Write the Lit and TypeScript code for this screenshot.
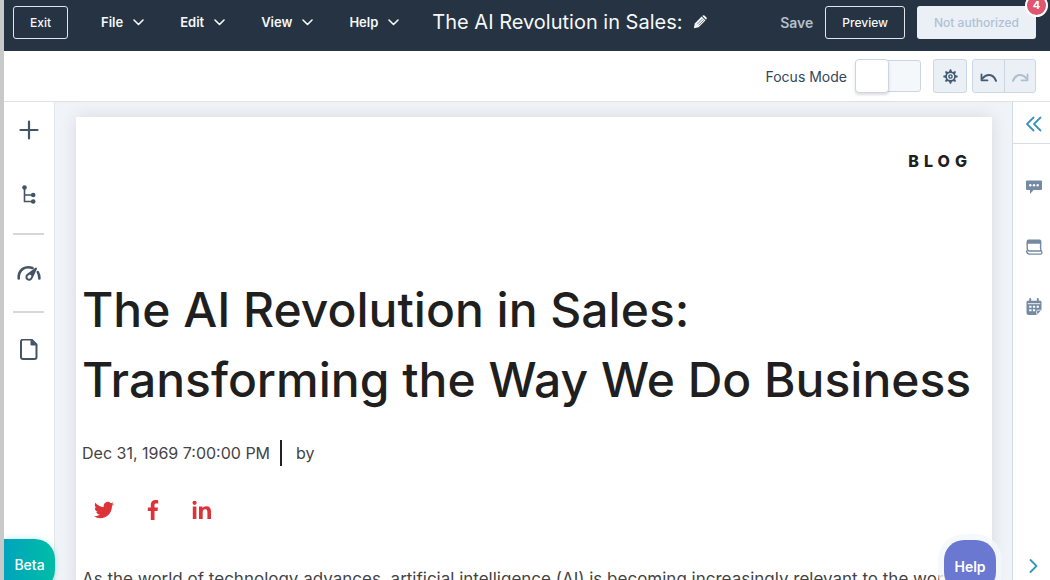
import { LitElement, html, css, svg } from "lit";
import { customElement, state } from "lit/decorators.js";

const menus = ["File", "Edit", "View", "Help"];

const chevron = html`<svg width="11" height="7" viewBox="0 0 11 7" aria-hidden="true">
  <path d="M1 1l4.5 4.5L10 1" fill="none" stroke="currentColor" stroke-width="1.6" stroke-linecap="round" stroke-linejoin="round" />
</svg>`;

const pencil = html`<svg width="14" height="14" viewBox="0 0 14 14" aria-hidden="true">
  <path d="M.8 13.200l1-4.800L8.600 1.600l3.800 3.800L5.600 12.200z" fill="currentColor" />
  <path d="M9.300 1l.6-.5q.8-.6 1.500 0l2.100 2.100q.6.800 0 1.500l-.5.600z" fill="currentColor" />
  <path d="M4.200 9.200l5.500-5.500M5.600 10.400l5.300-5.300" stroke="#253342" stroke-width=".6" fill="none" />
</svg>`;

const teeth = [0, 45, 90, 135, 180, 225, 270, 315];
const gear = html`<svg width="15" height="15" viewBox="0 0 14 14" aria-hidden="true">
  <circle cx="7" cy="7" r="4.100" fill="none" stroke="currentColor" stroke-width="1.500" />
  <circle cx="7" cy="7" r="1.500" fill="none" stroke="currentColor" stroke-width="1.300" />
  ${teeth.map((a) => svg`<path d="M5.500 2.900L6.400 .3h1.200l.9 2.600z" fill="currentColor" transform="rotate(${a} 7 7)" />`)}
</svg>`;

const undo = html`<svg width="18" height="12" viewBox="0 0 18 12" aria-hidden="true">
  <path d="M2.500 8.500C6 4 13 3 16 10.800" fill="none" stroke="currentColor" stroke-width="2" stroke-linecap="round" />
  <path d="M1.500 4.500v5.800H7.500" fill="none" stroke="currentColor" stroke-width="1.800" stroke-linecap="round" stroke-linejoin="round" />
</svg>`;

const redo = html`<svg width="18" height="12" viewBox="0 0 18 12" aria-hidden="true">
  <path d="M15.500 8.500C12 4 5 3 2 10.800" fill="none" stroke="currentColor" stroke-width="2" stroke-linecap="round" />
  <path d="M16.500 4.500v5.800H10.500" fill="none" stroke="currentColor" stroke-width="1.800" stroke-linecap="round" stroke-linejoin="round" />
</svg>`;

const plus = html`<svg width="24" height="24" viewBox="0 0 24 24" aria-hidden="true">
  <path d="M12 3.500v17M3.500 12h17" stroke="currentColor" stroke-width="2.200" stroke-linecap="round" />
</svg>`;

const tree = html`<svg width="24" height="24" viewBox="0 0 24 24" aria-hidden="true">
  <path d="M7.500 4v14.500h8M7.500 12h8" fill="none" stroke="currentColor" stroke-width="1.600" />
  <circle cx="7.500" cy="4.500" r="2.300" fill="currentColor" />
  <circle cx="16.200" cy="12" r="2.300" fill="currentColor" />
  <circle cx="16.200" cy="18.500" r="2.300" fill="currentColor" />
</svg>`;

const gauge = html`<svg width="24" height="24" viewBox="0 0 24 24" aria-hidden="true">
  <path d="M1.700 17.500C1.200 8.500 8.500 4.500 15.500 7" fill="none" stroke="currentColor" stroke-width="2.600" stroke-linecap="round" />
  <path d="M20.800 11.200q1.700 2.800 1.600 6.300" fill="none" stroke="currentColor" stroke-width="2.600" stroke-linecap="round" />
  <path d="M19 7.500l-4.300 9.300a2.700 2.700 0 1 1-4.200-2.900z" fill="none" stroke="currentColor" stroke-width="2" stroke-linejoin="round" />
  <path d="M19 7.500l-3.600 8-3.200-2.500z" fill="currentColor" />
</svg>`;

const page = html`<svg width="24" height="24" viewBox="0 2 24 24" aria-hidden="true">
  <path d="M6 2.500h8.500l5 5V20a2 2 0 0 1-2 2H6a2 2 0 0 1-2-2V4.500a2 2 0 0 1 2-2z" fill="none" stroke="currentColor" stroke-width="2" stroke-linejoin="round" />
  <path d="M13.500 2.500v4.800q0 1.200 1.200 1.200h4.800z" fill="currentColor" />
</svg>`;

const collapse = html`<svg width="18" height="16" viewBox="0 0 18 16" aria-hidden="true">
  <path d="M8.500 1.500L2 8l6.500 6.500M15.500 1.500L9 8l6.500 6.500" fill="none" stroke="currentColor" stroke-width="1.800" stroke-linecap="round" stroke-linejoin="round" />
</svg>`;

const chat = html`<svg width="18" height="18" viewBox="0 0 18 18" aria-hidden="true">
  <path d="M2 2.500h14q1 0 1 1V11q0 1-1 1H8.500L5 16V12H2q-1 0-1-1V3.500q0-1 1-1z" fill="currentColor" />
  <circle cx="5.300" cy="7.200" r="1.200" fill="#fff" /><circle cx="9" cy="7.200" r="1.200" fill="#fff" /><circle cx="12.700" cy="7.200" r="1.200" fill="#fff" />
</svg>`;

const panel = html`<svg width="18" height="18" viewBox="0 0 18 18" aria-hidden="true">
  <path d="M1.700 5.800V3.200q0-1.600 1.600-1.600h11.400q1.600 0 1.600 1.600v2.600z" fill="currentColor" />
  <path d="M2.200 5v5q0 3 2.300 3H16.400q-.8-1.200-.8-3V5M1.600 13q.2 3.100 3.200 3.100h11q1.200-.3 1.200-2" fill="none" stroke="currentColor" stroke-width="1.400" stroke-linejoin="round" stroke-linecap="round" />
</svg>`;

const calendar = html`<svg width="18" height="18" viewBox="0 0 18 18" aria-hidden="true">
  <path d="M2.800 2.800h12.400q1.300 0 1.300 1.300V12l-5 5H4q-2.500 0-2.500-2.500V4.100q0-1.300 1.300-1.300z" fill="currentColor" />
  <path d="M5.200 1v3M12.800 1v3" stroke="currentColor" stroke-width="2" stroke-linecap="round" />
  <path d="M2.800 5.700h12.400" stroke="#fff" stroke-width=".9" />
  <path d="M4.200 8.700h2.300M7.900 8.700h2.300M11.600 8.700h2.300M4.200 12.200h2.300M7.900 12.200h2.300" stroke="#fff" stroke-width="2" />
  <path d="M11.700 16.500v-3.300q0-1 1-1h3.300" fill="none" stroke="#fff" stroke-width=".8" />
</svg>`;

const next = html`<svg width="10" height="16" viewBox="0 0 10 16" aria-hidden="true">
  <path d="M1.500 2l6 6-6 6" fill="none" stroke="currentColor" stroke-width="1.800" stroke-linecap="round" stroke-linejoin="round" />
</svg>`;

const twitter = html`<svg width="20" height="20" viewBox="0 0 24 24" aria-hidden="true">
  <path fill="currentColor" d="M23.950 4.570a10 10 0 0 1-2.820.770 4.960 4.960 0 0 0 2.160-2.720c-.950.550-2 .950-3.130 1.180a4.920 4.920 0 0 0-8.380 4.480C7.690 8.090 4.070 6.130 1.640 3.160a4.820 4.820 0 0 0-.670 2.480c0 1.710.870 3.210 2.190 4.100a4.900 4.900 0 0 1-2.230-.620v.060a4.920 4.920 0 0 0 3.950 4.830 5 5 0 0 1-2.210.080 4.940 4.940 0 0 0 4.600 3.420A9.870 9.870 0 0 1 0 19.540a13.990 13.990 0 0 0 7.550 2.210c9.050 0 14-7.500 14-13.980 0-.210 0-.420-.020-.630a9.940 9.940 0 0 0 2.460-2.550z" />
</svg>`;

const facebook = html`<svg width="20" height="20" viewBox="0 0 20 20" aria-hidden="true">
  <path fill="currentColor" d="M15.200.2v3.200h-1.900c-1.500 0-1.800.7-1.800 1.700v2.300h3.500l-.5 3.500h-3V20H7.800v-9.100h-3V7.400h3V4.800C7.800 1.700 9.700 0 12.400 0c1.300 0 2.500.1 2.800.2z" />
</svg>`;

const linkedin = html`<svg width="20" height="20" viewBox="0 0 20 20" aria-hidden="true">
  <circle cx="2.600" cy="2.800" r="2.100" fill="currentColor" />
  <path fill="currentColor" d="M.8 6.500h3.600V19H.8zM7 6.500h3.500v1.700c.6-1.100 1.900-2 3.700-2 3.800 0 4.800 2.400 4.800 5.600V19h-3.600v-6.400c0-1.600-.2-3.300-2.200-3.300s-2.500 1.600-2.500 3.200V19H7z" />
</svg>`;

@customElement("app-root")
export class AppRoot extends LitElement {
  @state() private focusMode = false;

  static styles = css`
    :host {
      display: flex;
      flex-direction: column;
      box-sizing: border-box;
      position: relative;
      height: 100vh;
      overflow: hidden;
      border-left: 4px solid #c9c9c9;
      background: #fff;
      color: #33475b;
      font-family: Inter, "Open Sans", sans-serif;
      font-size: 14px;
    }
    *, *::before { box-sizing: border-box; }
    svg { display: block; flex: none; }
    button { font: inherit; color: inherit; margin: 0; padding: 0; border: 0; background: none; cursor: pointer; }

    .topbar {
      display: flex;
      align-items: center;
      flex: none;
      height: 51px;
      padding: 0 14px 7px 9px;
      background: #253342;
      color: #f5f8fa;
      white-space: nowrap;
    }
    .outlined, .publish { height: 33px; border-radius: 3px; font-size: 12px; font-weight: 500; }
    .outlined { border: 1px solid #dfe6ec; padding: 0 16px; }
    .menus { display: flex; gap: 36px; margin: 0 33px; }
    .menu { display: flex; align-items: center; gap: 10px; font-size: 13px; font-weight: 600; }
    .title { display: flex; align-items: center; gap: 10px; margin: 0; font-size: 20px; line-height: 24px; font-weight: 400; }
    .actions { display: flex; align-items: center; gap: 12px; margin-left: auto; }
    .save { font-weight: 600; color: #b3bfcb; }
    .publish { position: relative; padding: 0 17px; background: #eaf0f6; color: #b0c1d4; }
    .badge {
      position: absolute;
      top: -12px;
      right: -12px;
      width: 23px;
      height: 23px;
      border: 2px solid #fff;
      border-radius: 50%;
      background: #e0566f;
      color: #fff;
      font-size: 11px;
      line-height: 19px;
      font-weight: 700;
      text-align: center;
    }

    .toolbar {
      display: flex;
      justify-content: flex-end;
      align-items: center;
      flex: none;
      height: 51px;
      padding: 0 14px;
      border-bottom: 1px solid #dfe1e3;
    }
    .focus { display: flex; align-items: center; gap: 8px; margin-right: 12px; }
    .toggle {
      appearance: none;
      display: flex;
      align-items: center;
      width: 66px;
      height: 32px;
      margin: 0;
      border: 1px solid #cbd6e2;
      border-radius: 3px;
      background: #f5f8fa;
    }
    .toggle::before {
      content: "";
      width: 34px;
      height: 34px;
      margin-left: -1px;
      border: 1px solid #cbd6e2;
      border-radius: 4px;
      background: #fff;
      box-shadow: 0 2px 3px #00000022;
    }
    .toggle:checked::before { margin-left: 31px; }
    .tool, .history {
      height: 34px;
      border: 1px solid #cbd6e2;
      border-radius: 3px;
      background: #eaf0f6;
      color: #425b76;
    }
    .tool { display: grid; place-items: center; width: 34px; margin-right: 5px; }
    .history { display: flex; }
    .step { display: grid; place-items: center; width: 31px; }
    .step + .step { border-left: 1px solid #cbd6e2; }
    .step:disabled { color: #b0bfcd; }

    .workspace { display: flex; flex: 1; min-height: 0; }
    .rail {
      display: flex;
      flex-direction: column;
      align-items: center;
      flex: none;
      width: 51px;
      padding: 16px 1px 0 0;
      border-right: 1px solid #e3e8ed;
      color: #425466;
    }
    .rail-item { display: grid; place-items: center; }
    .gap { margin-top: 41px; }
    .rule { width: 31px; height: 0; margin: 26px 0; border: 0; border-top: 2px solid #d5d7d9; }
    .canvas { flex: 1; min-width: 0; padding: 15px 20px 0 21px; background: #f0f4f8; overflow: hidden; }
    .sheet {
      min-height: 100%;
      padding: 33px 20px 0 6px;
      background: #fff;
      box-shadow: 0 0 16px #0000001c;
      color: #1f1f1f;
    }
    .kind {
      margin: 0 0 103px;
      font-size: 16px;
      line-height: 22px;
      font-weight: 800;
      letter-spacing: 5px;
      text-align: right;
    }
    .headline { margin: 0; font-size: 48px; line-height: 70px; font-weight: 500; }
    .byline { display: flex; align-items: center; gap: 10px; margin: 25px 0 0; font-size: 16px; line-height: 26px; color: #444; }
    .author { padding-left: 14px; border-left: 2px solid #222; }
    .social { display: flex; gap: 29px; margin: 34px 0 45px 12px; color: #dc3338; }
    .social a { color: inherit; }
    .copy { margin: 0; font-size: 17px; line-height: 28px; color: #444; white-space: nowrap; }

    .sidebar {
      display: flex;
      flex-direction: column;
      align-items: stretch;
      flex: none;
      width: 38px;
      border-left: 1px solid #d3dce6;
      color: #7489a2;
    }
    .side-item { display: grid; place-items: center; padding-left: 5px; }
    .collapse { height: 42px; margin-bottom: 34px; padding-top: 2px; border-bottom: 1px solid #d6dde5; color: #3d94ba; }
    .tabs { display: grid; gap: 42px; }
    .expand { margin-top: auto; margin-bottom: 6px; color: #3d94ba; }

    .beta, .help {
      position: absolute;
      color: #fff;
    }
    .beta {
      left: 0;
      bottom: -10px;
      width: 51px;
      height: 51px;
      border-radius: 0 20px 20px 0;
      background: linear-gradient(90deg, #00a4bd, #00bda5);
      box-shadow: 0 0 6px #00a4bd44;
      font-weight: 500;
    }
    .help {
      right: 54px;
      bottom: -12px;
      width: 52px;
      height: 52px;
      border-radius: 20px;
      background: #6a78d1;
      box-shadow: 0 0 0 6px #f3f7fbcc;
      font-weight: 600;
    }
  `;

  private toggleFocus(e: Event) {
    this.focusMode = (e.target as HTMLInputElement).checked;
  }

  render() {
    return html`
      <header class="topbar">
        <button class="outlined">Exit</button>
        <nav class="menus">
          ${menus.map((m) => html`<button class="menu">${m}${chevron}</button>`)}
        </nav>
        <h2 class="title">The AI Revolution in Sales: <button aria-label="Rename">${pencil}</button></h2>
        <div class="actions">
          <button class="save">Save</button>
          <button class="outlined">Preview</button>
          <button class="publish">Not authorized<span class="badge">4</span></button>
        </div>
      </header>
      <div class="toolbar">
        <label class="focus" for="focus">Focus Mode
          <input class="toggle" id="focus" type="checkbox" .checked=${this.focusMode} @change=${this.toggleFocus} />
        </label>
        <button class="tool" aria-label="Settings">${gear}</button>
        <div class="history">
          <button class="step" aria-label="Undo">${undo}</button>
          <button class="step" aria-label="Redo" disabled>${redo}</button>
        </div>
      </div>
      <div class="workspace">
        <nav class="rail">
          <button class="rail-item" aria-label="Add">${plus}</button>
          <button class="rail-item gap" aria-label="Contents">${tree}</button>
          <hr class="rule" />
          <button class="rail-item" aria-label="Optimize">${gauge}</button>
          <hr class="rule" />
          <button class="rail-item" aria-label="Pages">${page}</button>
        </nav>
        <main class="canvas">
          <article class="sheet">
            <p class="kind">BLOG</p>
            <h1 class="headline">The AI Revolution in Sales:<br />Transforming the Way We Do Business</h1>
            <p class="byline"><time>Dec 31, 1969 7:00:00 PM</time><span class="author">by</span></p>
            <div class="social">
              <a href="#" aria-label="Twitter">${twitter}</a>
              <a href="#" aria-label="Facebook">${facebook}</a>
              <a href="#" aria-label="LinkedIn">${linkedin}</a>
            </div>
            <p class="copy">As the world of technology advances, artificial intelligence (AI) is becoming increasingly relevant to the world</p>
          </article>
        </main>
        <aside class="sidebar">
          <button class="side-item collapse" aria-label="Expand panel">${collapse}</button>
          <div class="tabs">
            <button class="side-item" aria-label="Comments">${chat}</button>
            <button class="side-item" aria-label="Assets">${panel}</button>
            <button class="side-item" aria-label="Schedule">${calendar}</button>
          </div>
          <button class="side-item expand" aria-label="Next">${next}</button>
        </aside>
      </div>
      <button class="beta">Beta</button>
      <button class="help">Help</button>
    `;
  }
}
